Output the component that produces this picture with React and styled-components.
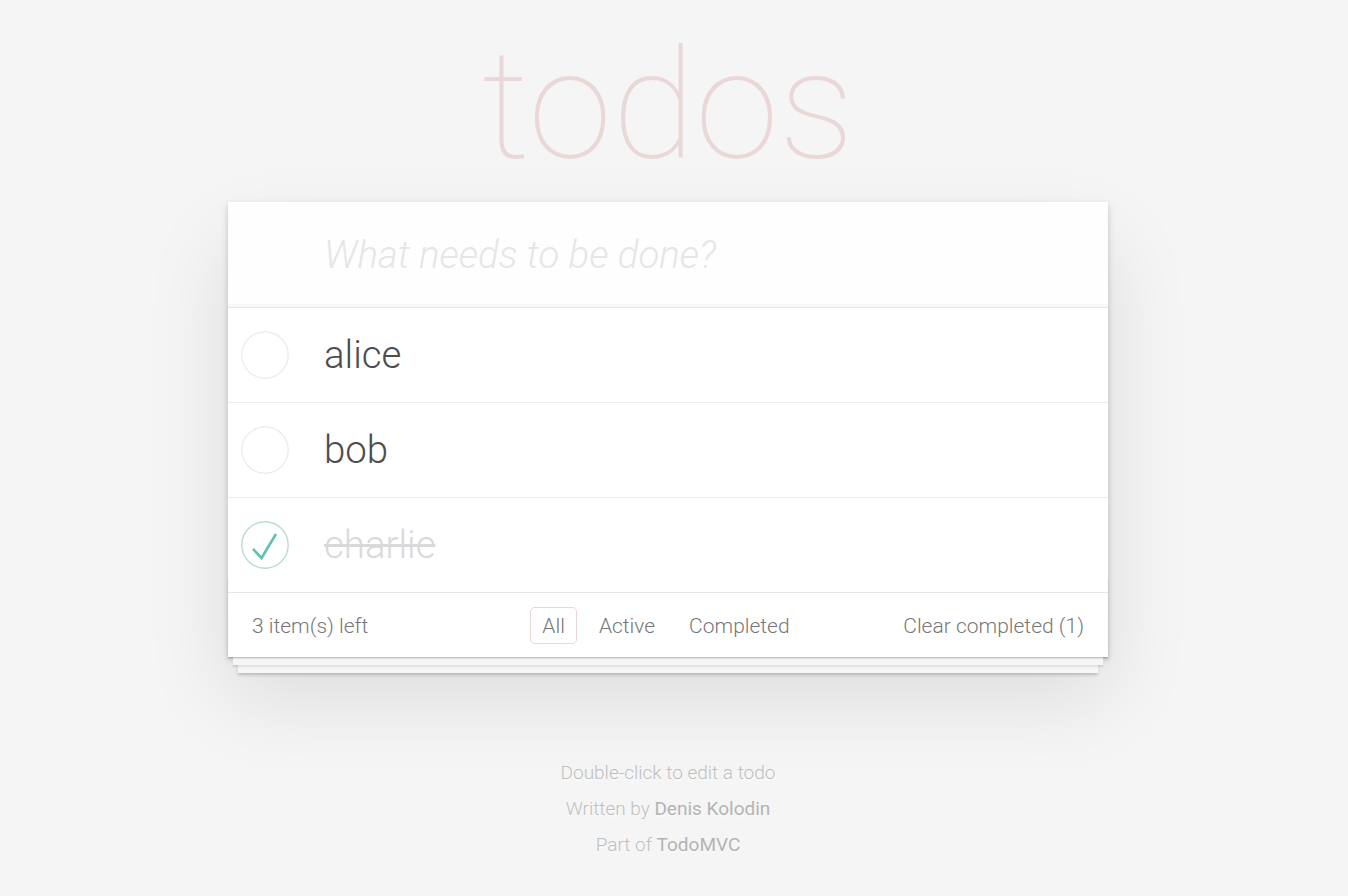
import React, { useState } from 'react';
import styled, { createGlobalStyle } from 'styled-components';

const GlobalStyle = createGlobalStyle`
  html, body { margin: 0; padding: 0; }
  body {
    background: #f5f5f5;
    font-family: Roboto, 'Helvetica Neue', Arial, sans-serif;
    font-weight: 300;
    color: #4d4d4d;
    line-height: 1.4;
    -webkit-font-smoothing: antialiased;
  }
`;

const Page = styled.div`
  padding: 30px 12px 40px 0;
`;

const Column = styled.div`
  width: 880px;
  margin: 0 auto;
`;

const Title = styled.h1`
  margin: 0 0 20px;
  font-size: 152px;
  line-height: 152px;
  font-weight: 100;
  text-align: center;
  color: rgba(175, 47, 47, 0.15);
`;

const TodoApp = styled.section`
  position: relative;
  background: #fff;
  box-shadow: 0 3.2px 6.4px 0 rgba(0, 0, 0, 0.2), 0 40px 80px 0 rgba(0, 0, 0, 0.1);
`;

const NewTodo = styled.input`
  display: block;
  box-sizing: border-box;
  width: 100%;
  height: 104.8px;
  margin: 0;
  padding: 25.6px 25.6px 25.6px 96px;
  border: none;
  outline: none;
  background: rgba(0, 0, 0, 0.003);
  box-shadow: inset 0 -3.2px 1.6px rgba(0, 0, 0, 0.03);
  font-family: inherit;
  font-size: 38.4px;
  font-weight: 300;
  color: inherit;

  &::placeholder {
    font-style: italic;
    font-weight: 300;
    color: #e6e6e6;
  }
`;

const List = styled.ul`
  margin: 0;
  padding: 0;
  list-style: none;
  border-top: 1.6px solid #e6e6e6;
`;

const Item = styled.li`
  display: flex;
  align-items: center;
  border-bottom: 1.6px solid #ededed;
  &:last-child { border-bottom: none; }
`;

const Toggle = styled.button`
  flex: none;
  width: 48px;
  height: 48px;
  margin: 0 35px 0 13px;
  padding: 0;
  border: none;
  background: none;
  cursor: pointer;
  svg { display: block; }
`;

const Label = styled.label`
  flex: 1;
  padding: 24px 96px 24px 0;
  font-size: 38.4px;
  line-height: 1.2;
  word-break: break-all;
  color: ${p => (p.$done ? '#d9d9d9' : '#4d4d4d')};
  text-decoration: ${p => (p.$done ? 'line-through' : 'none')};
`;

const Footer = styled.footer`
  position: relative;
  display: grid;
  grid-template-columns: 1fr auto 1fr;
  align-items: center;
  height: 32px;
  padding: 14px 24px 18px;
  border-top: 1.6px solid #e6e6e6;
  color: #777;
  font-size: 21px;
  line-height: 32px;

  &::before {
    content: '';
    position: absolute;
    left: 0;
    right: 0;
    bottom: 0;
    height: 80px;
    overflow: hidden;
    box-shadow: 0 1.6px 1.6px rgba(0, 0, 0, 0.2),
      0 12.8px 0 -4.8px #f6f6f6,
      0 14.4px 1.6px -4.8px rgba(0, 0, 0, 0.2),
      0 25.6px 0 -9.6px #f6f6f6,
      0 27.2px 3.2px -9.6px rgba(0, 0, 0, 0.2);
    z-index: 0;
  }
  > * { position: relative; z-index: 1; }
`;

const Count = styled.span`
  justify-self: start;
`;

const Filters = styled.ul`
  display: flex;
  margin: 0 0 0 -4px;
  padding: 0;
  list-style: none;
`;

const FilterLink = styled.a`
  display: inline-block;
  margin: 0 4.8px;
  padding: 5.6px 11.2px 4.8px;
  line-height: 25px;
  border: 1.6px solid ${p => (p.$selected ? 'rgba(175, 47, 47, 0.2)' : 'transparent')};
  border-radius: 4.8px;
  color: inherit;
  text-decoration: none;
  cursor: pointer;
`;

const ClearButton = styled.button`
  justify-self: end;
  margin: 0;
  padding: 0;
  border: none;
  background: none;
  font: inherit;
  color: inherit;
  cursor: pointer;
`;

const Info = styled.footer`
  margin-top: 106px;
  text-align: center;
  color: #bfbfbf;
  font-size: 19px;
  text-shadow: 0 1.6px 0 rgba(255, 255, 255, 0.5);

  p { margin: 0 0 17px; line-height: 19px; }
  a { color: #b3b3b3; text-decoration: none; font-weight: 400; }
`;

const CheckIcon = ({ done }) => (
  <svg width="48" height="48" viewBox="0 0 48 48">
    <circle cx="24" cy="24" r="23.2" fill="none" stroke={done ? '#bddad5' : '#ededed'} strokeWidth="1.4" />
    {done && (
      <path d="M12 28 L20.5 37 L35 13" fill="none" stroke="#5dc2af" strokeWidth="2.6" />
    )}
  </svg>
);

export default function App() {
  const [todos, setTodos] = useState([
    { id: 1, title: 'alice', done: false },
    { id: 2, title: 'bob', done: false },
    { id: 3, title: 'charlie', done: true },
  ]);
  const [filter, setFilter] = useState('All');

  const toggle = id =>
    setTodos(todos.map(t => (t.id === id ? { ...t, done: !t.done } : t)));

  const shown = todos.filter(t =>
    filter === 'All' ? true : filter === 'Active' ? !t.done : t.done
  );
  const completed = todos.filter(t => t.done).length;

  return (
    <Page>
      <GlobalStyle />
      <Column>
        <Title>todos</Title>
        <TodoApp>
          <NewTodo placeholder="What needs to be done?" />
          <List>
            {shown.map(t => (
              <Item key={t.id}>
                <Toggle onClick={() => toggle(t.id)}>
                  <CheckIcon done={t.done} />
                </Toggle>
                <Label $done={t.done}>{t.title}</Label>
              </Item>
            ))}
          </List>
          <Footer>
            <Count>{todos.length} item(s) left</Count>
            <Filters>
              {['All', 'Active', 'Completed'].map(f => (
                <li key={f}>
                  <FilterLink $selected={filter === f} onClick={() => setFilter(f)}>
                    {f}
                  </FilterLink>
                </li>
              ))}
            </Filters>
            <ClearButton>Clear completed ({completed})</ClearButton>
          </Footer>
        </TodoApp>
        <Info>
          <p>Double-click to edit a todo</p>
          <p>Written by <a href="#">Denis Kolodin</a></p>
          <p>Part of <a href="#">TodoMVC</a></p>
        </Info>
      </Column>
    </Page>
  );
}
